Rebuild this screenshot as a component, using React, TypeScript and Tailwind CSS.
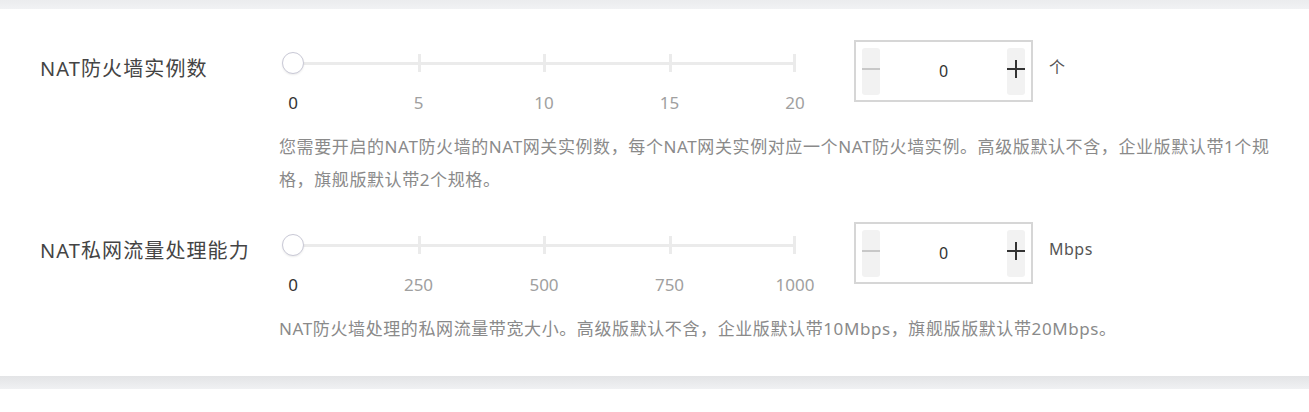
import React from 'react';

interface SliderRowProps {
  label: string;
  marks: string[];
  unit: string;
  desc: string;
}

const PlusIcon = () => (
  <svg width="18" height="18" viewBox="0 0 18 18" className="text-[#333]">
    <path d="M9 0v18M0 9h18" stroke="currentColor" strokeWidth="2" fill="none" />
  </svg>
);

const SliderRow: React.FC<SliderRowProps> = ({ label, marks, unit, desc }) => {
  return (
    <div className="flex items-start">
      {/* label */}
      <div className="w-[279px] shrink-0 pl-[40px] h-[58px] flex items-center text-[20px] tracking-[1.1px] text-[#444] whitespace-nowrap">
        {label}
      </div>

      <div className="flex flex-col">
        <div className="flex items-start">
          {/* slider */}
          <div className="w-[524px] ml-[3px] px-[11px] flex flex-col">
            <div className="relative h-[22px] mt-[12px]">
              <div className="absolute left-0 right-0 top-[10px] h-[3px] bg-[#ebebeb]" />
              {[25, 50, 75].map((p) => (
                <div
                  key={p}
                  className="absolute top-[2px] h-[18px] w-[3px] -ml-[1px] bg-[#ebebeb]"
                  style={{ left: `${p}%` }}
                />
              ))}
              <div className="absolute right-[-1px] top-[2px] h-[18px] w-[3px] bg-[#ebebeb]" />
              <div className="absolute -left-[11px] top-0 w-[22px] h-[22px] rounded-full bg-white border border-[#c9c9d6] shadow-[0_1px_2px_rgba(0,0,0,0.08)]" />
            </div>
            <div className="flex justify-between mt-[17px] text-[17px] leading-[24px]">
              {marks.map((m, i) => (
                <div key={m} className="w-0 flex justify-center">
                  <span className={i === 0 ? 'text-[#333]' : 'text-[#a0a0a0]'}>{m}</span>
                </div>
              ))}
            </div>
          </div>

          {/* number input */}
          <div className="ml-[48px] w-[179px] h-[62px] border-2 border-[#d6d6d6] flex items-center justify-between px-[6px]">
            <div className="w-[18px] h-[47px] bg-[#f2f2f2] rounded-[3px] flex items-center">
              <div className="w-full h-[2px] bg-[#c8c8c8] -mt-[4px]" />
            </div>
            <span className="text-[16px] text-[#333]">0</span>
            <div className="w-[18px] h-[47px] bg-[#f2f2f2] rounded-[3px] flex items-center justify-center">
              <div className="-mt-[4px]">
                <PlusIcon />
              </div>
            </div>
          </div>
          <div className="ml-[16px] h-[62px] flex items-center text-[16px] tracking-[0.5px] text-[#555] -mt-[4px]">{unit}</div>
        </div>

        <p className="mt-[15px] w-[1012px] text-[17px] tracking-[0.6px] leading-[33px] text-[#8a8a8a]">{desc}</p>
      </div>
    </div>
  );
};

export default function App() {
  return (
    <div
      className="w-[1309px] h-[412px] bg-white flex flex-col"
      style={{ fontFamily: '"Noto Sans", "Noto Sans CJK SC", sans-serif' }}
    >
      <div className="h-[9px] bg-gradient-to-b from-[#ebecee] to-[#f1f2f4]" />
      <div className="pt-[31px] pb-[31px] flex flex-col gap-[26px]">
        <SliderRow
          label="NAT防火墙实例数"
          marks={['0', '5', '10', '15', '20']}
          unit="个"
          desc="您需要开启的NAT防火墙的NAT网关实例数，每个NAT网关实例对应一个NAT防火墙实例。高级版默认不含，企业版默认带1个规格，旗舰版默认带2个规格。"
        />
        <SliderRow
          label="NAT私网流量处理能力"
          marks={['0', '250', '500', '750', '1000']}
          unit="Mbps"
          desc="NAT防火墙处理的私网流量带宽大小。高级版默认不含，企业版默认带10Mbps，旗舰版版默认带20Mbps。"
        />
      </div>
      <div className="h-[13px] bg-gradient-to-b from-[#e3e4e6] to-[#f0f1f3]" />
      <div className="flex-1 bg-white" />
    </div>
  );
}
